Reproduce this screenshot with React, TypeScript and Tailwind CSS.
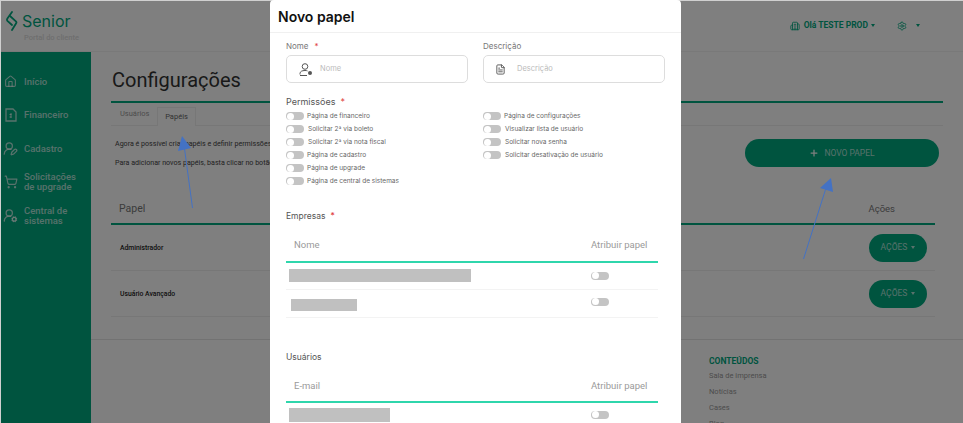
import { Building2, FileText, House, Plus, Settings, ShoppingCart, UserRoundCog, UserRoundPen } from 'lucide-react'
import type { ReactNode } from 'react'

function Caret() {
  return <span className="inline-block w-0 h-0 border-x-[2.5px] border-x-transparent border-t-[3px] border-t-current" />
}

function Toggle() {
  return (
    <span className="flex items-center w-[18px] h-[8px] -mt-px rounded-full bg-[#c4c4c4] shrink-0">
      <span className="w-[7px] h-[7px] ml-[1px] rounded-full bg-white" />
    </span>
  )
}

function SideItem({ icon, children }: { icon: ReactNode; children: ReactNode }) {
  return (
    <div className="flex items-center h-[33.5px] pl-[3px] gap-[6px] text-[9.5px] leading-[10px] text-white/70 font-medium">
      <span className="w-[15px] flex justify-center">{icon}</span>
      <span>{children}</span>
    </div>
  )
}

function Perm({ label, wide }: { label: string; wide?: boolean }) {
  return (
    <div className="flex items-center h-[13px] text-[6.5px] text-[#666]">
      <Toggle />
      <span className={wide ? 'ml-[4px]' : 'ml-[3px]'}>{label}</span>
    </div>
  )
}

function RoleRow({ name }: { name: string }) {
  return (
    <div className="flex items-center justify-between h-[46px] pl-[9px] pr-[8px] border-b border-[#eeeeee]">
      <span className="pt-px text-[6.8px] font-medium text-[#222]">{name}</span>
      <button className="flex items-center justify-center gap-[4px] w-[58px] h-[28px] rounded-full bg-[#00a87f] text-white/70 text-[8.5px]">
        AÇÕES <Caret />
      </button>
    </div>
  )
}

function TableHead({ first, height }: { first: string; height: string }) {
  return (
    <div className={`grid grid-cols-[305px_1fr] items-center ${height} text-[9.5px] text-[#9a9a9a] font-['Roboto',sans-serif] border-b-2 border-[#2fd6ac]`}>
      <span className="pl-[8px]">{first}</span>
      <span>Atribuir papel</span>
    </div>
  )
}

export default function App() {
  return (
    <div className="relative h-[423px] w-[963px] overflow-hidden bg-white font-['Roboto',sans-serif] text-[#333]">
      <header className="flex items-center justify-between h-[52px] border-b border-[#f2f2f2]">
        <div className="pl-[5px] pt-[2px]">
          <div className="flex items-center gap-[4px] h-[22px]">
            <svg width="13" height="20" viewBox="0 0 13 20" fill="none" stroke="#00a87f" strokeWidth="1.8" strokeLinecap="round" strokeLinejoin="round">
              <path d="M7 1 2.4 7.5c-.6 .9-.6 1.6 0 2.3L7 14" />
              <path d="M5 5 10.9 10.3c.7 .7.7 1.4 .1 2.2L7 19" />
            </svg>
            <span className="text-[16px] leading-none text-[#00a87f] font-['Inter',sans-serif]">Senior</span>
          </div>
          <div className="pl-[19px] text-[7.5px] leading-[12px] text-[#dddddd] font-medium">Portal do cliente</div>
        </div>
        <div className="flex items-center pr-[43px] text-[#00a87f]">
          <Building2 size={10} />
          <span className="ml-[4px] text-[8.5px] font-bold">Olá TESTE PROD</span>
          <span className="ml-[3px] flex"><Caret /></span>
          <Settings size={10} className="ml-[22px]" />
          <span className="ml-[9px] flex"><Caret /></span>
        </div>
      </header>

      <div className="flex h-[371px]">
        <aside className="w-[91px] shrink-0 bg-[#00a87f] pt-[13px]">
          <SideItem icon={<House size={13} />}>Início</SideItem>
          <SideItem icon={
            <svg width="12" height="14" viewBox="0 0 12 14" fill="none" stroke="currentColor" strokeWidth="1.3">
              <path d="M1 1h7l3 3v9H1z" />
              <path d="M6 5v5M4.5 6.5h2M4.5 9h2" strokeWidth="1" />
            </svg>
          }>Financeiro</SideItem>
          <SideItem icon={<UserRoundPen size={15} />}>Cadastro</SideItem>
          <SideItem icon={<ShoppingCart size={14} />}>Solicitações<br />de upgrade</SideItem>
          <SideItem icon={<UserRoundCog size={15} />}>Central de<br />sistemas</SideItem>
        </aside>

        <main className="flex-1 min-w-0">
          <div className="px-[20px]">
            <h1 className="h-[49px] pt-[13px] pl-px text-[20px] leading-[30px] text-[#333]">Configurações</h1>
            <div className="flex h-[25px] border-t-2 border-b border-t-[#00a87f] border-b-[#eeeeee] pl-[9px] text-[7.5px]">
              <span className="flex items-center w-[37px] text-[#999]">Usuários</span>
              <span className="flex items-center justify-center w-[39px] mt-[4px] -mb-px bg-white border border-b-0 border-[#eeeeee] text-[#666]">Papéis</span>
            </div>
            <div className="flex justify-between pl-[4px] pr-[4px] pt-[13px] h-[70px]">
              <div className="w-[400px] -mt-[5px] text-[7.1px] leading-[19px] text-[#444]">
                <p className="whitespace-nowrap">Agora é possível criar papéis e definir permissões para os usuários.</p>
                <p className="whitespace-nowrap">Para adicionar novos papéis, basta clicar no botão ao lado.</p>
              </div>
              <button className="flex items-center justify-center gap-[5px] w-[194px] h-[28px] rounded-full bg-[#00a87f] text-white/70 text-[8.5px]">
                <Plus size={10} strokeWidth={3} className="text-white" /> NOVO PAPEL
              </button>
            </div>
            <div className="flex items-center justify-between h-[30px] mt-[-1px] pl-[8px] pr-[40px] mr-[8px] border-b-2 border-[#00a87f] text-[10.5px] text-[#777]">
              <span>Papel</span>
              <span className="text-[9.5px]">Ações</span>
            </div>
            <div className="mr-[8px]">
              <RoleRow name="Administrador" />
              <RoleRow name="Usuário Avançado" />
            </div>
          </div>
          <footer className="mt-[22px] border-t border-[#e4e4e4] pl-[618px] pt-[15px]">
            <div className="text-[8.5px] leading-[12px] font-bold text-[#00a87f]">CONTEÚDOS</div>
            <ul className="mt-[1px] text-[7.5px] leading-[16px] text-[#999]">
              <li>Sala de imprensa</li>
              <li>Notícias</li>
              <li>Cases</li>
              <li>Blog</li>
            </ul>
          </footer>
        </main>
      </div>

      <div className="absolute inset-0 bg-black/50" />
      <div className="absolute left-0 top-0 right-0 h-px bg-[#d0d0d0]" />
      <div className="absolute left-0 top-0 bottom-0 w-px bg-[#d0d0d0]" />

      <svg className="absolute inset-0" width="963" height="423" fill="#4472c4" stroke="#4472c4">
        <line x1="192.5" y1="208" x2="184" y2="145" strokeWidth="1" />
        <polygon points="182,136 178,151 191,148" stroke="none" />
        <line x1="803.5" y1="259" x2="826" y2="188" strokeWidth="1" />
        <polygon points="831,178 820,188 833,192" stroke="none" />
      </svg>

      <div className="absolute left-[270px] top-0 bottom-0 w-[411px] overflow-hidden rounded-t-[4px] bg-white font-['Inter',sans-serif]">
        <div className="flex items-center h-[33px] pl-[8px] border-b border-[#f0f0f0] text-[14px] font-semibold text-[#111]">Novo papel</div>
        <div className="px-[16px]">
          <div className="grid grid-cols-2 gap-x-[15px]">
            <div>
              <div className="flex items-center h-[22px] pt-[4px] text-[8px] text-[#777]">Nome <span className="ml-[6px] text-[#e04040]">*</span></div>
              <div className="flex items-center h-[28px] pl-[12px] gap-[7px] rounded-[5px] border border-[#dddddd] text-[7.5px] text-[#bbbbbb]">
                <svg width="14" height="13" viewBox="0 0 14 13" fill="none" stroke="#555" strokeWidth="1">
                  <circle cx="6" cy="3.5" r="2.8" />
                  <path d="M1 11.5v-1C1 8.5 3 7.5 6 7.5c1 0 1.8.1 2.5.4M1 12.5h7" />
                  <circle cx="11" cy="10" r="2" fill="#555" stroke="none" />
                </svg>
                Nome
              </div>
            </div>
            <div>
              <div className="flex items-center h-[22px] pt-[4px] text-[8px] text-[#777]">Descrição</div>
              <div className="flex items-center h-[28px] pl-[11px] gap-[11px] rounded-[5px] border border-[#dddddd] text-[7.5px] text-[#bbbbbb]">
                <FileText size={11} className="text-[#555]" /> Descrição
              </div>
            </div>
          </div>

          <div className="flex items-center h-[27px] pt-[11px] text-[9px] text-[#555]">Permissões <span className="ml-[5px] text-[#e04040]">*</span></div>
          <div className="grid grid-cols-2 gap-x-[15px]">
            <div>
              <Perm label="Página de financeiro" />
              <Perm label="Solicitar 2ª via boleto" wide />
              <Perm label="Solicitar 2ª via nota fiscal" wide />
              <Perm label="Página de cadastro" />
              <Perm label="Página de upgrade" />
              <Perm label="Página de central de sistemas" />
            </div>
            <div>
              <Perm label="Página de configurações" />
              <Perm label="Visualizar lista de usuário" wide />
              <Perm label="Solicitar nova senha" wide />
              <Perm label="Solicitar desativação de usuário" wide />
            </div>
          </div>

          <div className="w-[372px]">
            <div className="flex items-center h-[14px] mt-[21px] text-[8.5px] text-[#555]">Empresas <span className="ml-[5px] text-[#e04040]">*</span></div>
            <TableHead first="Nome" height="h-[40px] pt-[7px]" />
            <div className="grid grid-cols-[305px_1fr] items-center h-[27px] border-b border-[#f3f3f3]">
              <span className="ml-[3px] w-[182px] h-[13px] -mt-px bg-[#c0c0c0]" />
              <Toggle />
            </div>
            <div className="grid grid-cols-[305px_1fr] items-center h-[28px] border-b border-[#f3f3f3]">
              <span className="ml-[5px] w-[66px] h-[12px] mt-[2px] bg-[#c0c0c0]" />
              <span className="-mt-[3px]"><Toggle /></span>
            </div>
            <div className="flex items-center h-[14px] mt-[32px] text-[8.5px] text-[#555]">Usuários</div>
            <TableHead first="E-mail" height="h-[39px] pt-[8px]" />
            <div className="grid grid-cols-[305px_1fr] items-center h-[20px] pt-[4px]">
              <span className="ml-[3px] w-[101px] h-[14px] -mt-px bg-[#c0c0c0]" />
              <Toggle />
            </div>
          </div>
        </div>
      </div>
    </div>
  )
}
